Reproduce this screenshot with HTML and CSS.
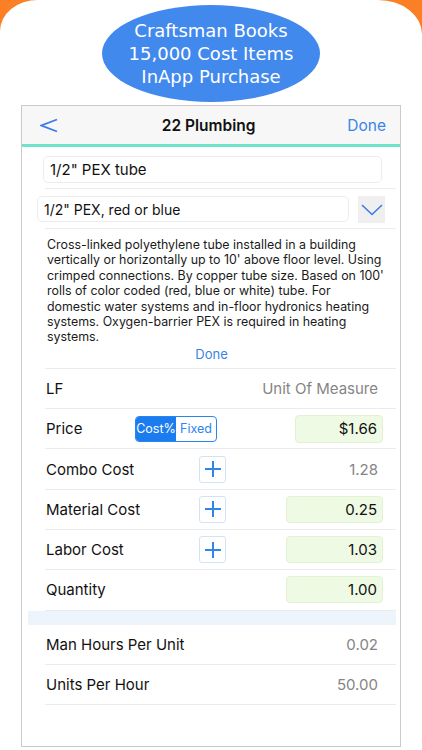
FILE: index.html
```html
<!DOCTYPE html>
<html lang="en">
<head>
    <meta charset="UTF-8">
    <meta name="viewport" content="width=device-width, initial-scale=1.0">
    <title>22 Plumbing</title>
    <link rel="stylesheet" href="styles.css">
</head>
<body>
    <div class="screen">
        <div class="promo">
            <span>Craftsman Books</span>
            <span>15,000 Cost Items</span>
            <span>InApp Purchase</span>
        </div>

        <div class="device">
            <div class="navbar">
                <svg class="back" width="18" height="15" viewBox="0 0 18 15">
                    <polyline points="17,1.5 1.5,7.5 17,13.5" fill="none" stroke="#3a7de8" stroke-width="1.8" stroke-linejoin="miter"/>
                </svg>
                <h1>22 Plumbing</h1>
                <span class="done">Done</span>
            </div>

            <div class="name-row">
                <input class="name" type="text" value="1/2&quot; PEX tube">
            </div>

            <div class="pick-row">
                <input class="pick" type="text" value="1/2&quot; PEX, red or blue">
                <button class="drop">
                    <svg width="22" height="12" viewBox="0 0 22 12">
                        <polyline points="1,1 11,10.5 21,1" fill="none" stroke="#3a7de8" stroke-width="1.6"/>
                    </svg>
                </button>
            </div>

            <div class="desc">
                <p>Cross-linked polyethylene tube installed in a building<br>
                vertically or horizontally up to 10' above floor level. Using<br>
                crimped connections. By copper tube size. Based on 100'<br>
                rolls of color coded (red, blue or white) tube. For<br>
                domestic water systems and in-floor hydronics heating<br>
                systems. Oxygen-barrier PEX is required in heating<br>
                systems.</p>
                <div class="desc-done">Done</div>
            </div>

            <div class="field">
                <span class="label">LF</span>
                <span class="value">Unit Of Measure</span>
            </div>
            <div class="field">
                <span class="label">Price</span>
                <div class="segment">
                    <span class="on">Cost%</span>
                    <span>Fixed</span>
                </div>
                <input class="entry short" type="text" value="$1.66">
            </div>
            <div class="field">
                <span class="label">Combo Cost</span>
                <button class="plus"></button>
                <span class="value">1.28</span>
            </div>
            <div class="field">
                <span class="label">Material Cost</span>
                <button class="plus"></button>
                <input class="entry" type="text" value="0.25">
            </div>
            <div class="field">
                <span class="label">Labor Cost</span>
                <button class="plus"></button>
                <input class="entry" type="text" value="1.03">
            </div>
            <div class="field">
                <span class="label">Quantity</span>
                <input class="entry" type="text" value="1.00">
            </div>

            <div class="band"></div>

            <div class="field">
                <span class="label">Man Hours Per Unit</span>
                <span class="value">0.02</span>
            </div>
            <div class="field">
                <span class="label">Units Per Hour</span>
                <span class="value">50.00</span>
            </div>
        </div>
    </div>
</body>
</html>
```

FILE: styles.css
```css
* { box-sizing: border-box; }
body { margin: 0; background: #fb7f24; font-family: Inter, "Liberation Sans", sans-serif; color: #111; }
.screen { background: #fff; height: 750px; overflow: hidden; border-top-left-radius: 38px 31px; border-top-right-radius: 44px 34px; padding-top: 5px; }

.promo { width: 218px; height: 97px; margin: 0 auto; border-radius: 50%; background: #4289ee; color: #fff; font-family: "DejaVu Sans", sans-serif; font-size: 18px; line-height: 23px; display: flex; flex-direction: column; align-items: center; justify-content: center; }

.device { margin: 3px 21px 0; height: 642px; border: 1px solid #cacaca; }

.navbar { height: 41px; background: #f7f7f7; border-bottom: 3px solid #70e2cb; display: flex; align-items: center; padding: 0 14px 0 18px; }
.navbar h1 { flex: 1; margin: 0; text-align: center; font-size: 15.5px; font-weight: 600; padding-left: 12px; }
.back { display: block; }
.done { color: #3a84e6; font-size: 15.5px; }

.name-row { margin: 0 4px 0 23px; height: 42px; padding-top: 9px; border-bottom: 1px solid #ebebeb; }
.name { margin-left: -2px; width: 339px; height: 27px; border: 1px solid #ececec; border-radius: 5px; padding: 0 6px; font: inherit; font-size: 15px; color: #111; }

.pick-row { margin: 0 4px 0 23px; height: 40px; padding-top: 7px; border-bottom: 1px solid #ebebeb; display: flex; }
.pick { margin-left: -8px; width: 312px; height: 26px; border: 1px solid #ececec; border-radius: 5px; padding: 0 6px; font: inherit; font-size: 14px; color: #111; }
.drop { margin-left: 9px; width: 27px; height: 27px; border: none; background: #efefef; padding: 0; display: flex; align-items: center; justify-content: center; }

.desc { margin: 0 4px 0 23px; padding: 8px 0 5px 2px; border-bottom: 1px solid #ebebeb; }
.desc p { margin: 0; white-space: nowrap; font-size: 12.4px; line-height: 15.4px; color: #1a1a1a; }
.desc-done { text-align: center; color: #3a84e6; font-size: 13px; line-height: 18px; margin-left: -20px; }

.field { margin: 0 4px 0 23px; height: 40.3px; border-bottom: 1px solid #ebebeb; display: flex; align-items: center; padding: 0 13px 0 1px; font-size: 15px; }
.label { flex: 0 0 89px; min-width: 0; white-space: nowrap; }
.value { margin-left: auto; padding-right: 5px; color: #858585; }

.segment { display: flex; height: 26px; border: 1px solid #2c85ee; border-radius: 4px; overflow: hidden; font-size: 12.5px; }
.segment span { width: 40px; display: flex; align-items: center; justify-content: center; color: #2c85ee; }
.segment .on { background: #1b7cf0; color: #fff; }

.plus { margin-left: 64px; width: 27px; height: 27px; border: 1px solid #d3e3f6; border-radius: 3px; background: #fff; position: relative; padding: 0; }
.plus::before, .plus::after { content: ""; position: absolute; background: #2f86ea; left: 50%; top: 50%; }
.plus::before { width: 16px; height: 2px; margin: -1px 0 0 -8px; }
.plus::after { width: 2px; height: 16px; margin: -8px 0 0 -1px; }

.entry { margin-left: auto; width: 97px; height: 27px; background: #eefae3; border: 1px solid #e2f0d4; border-radius: 4px; text-align: right; padding: 0 5px; font: inherit; font-size: 15px; color: #111; }
.entry.short { width: 88px; height: 28px; }

.band { margin: 0 4px 0 6px; height: 14px; background: #eef4fc; }
```
